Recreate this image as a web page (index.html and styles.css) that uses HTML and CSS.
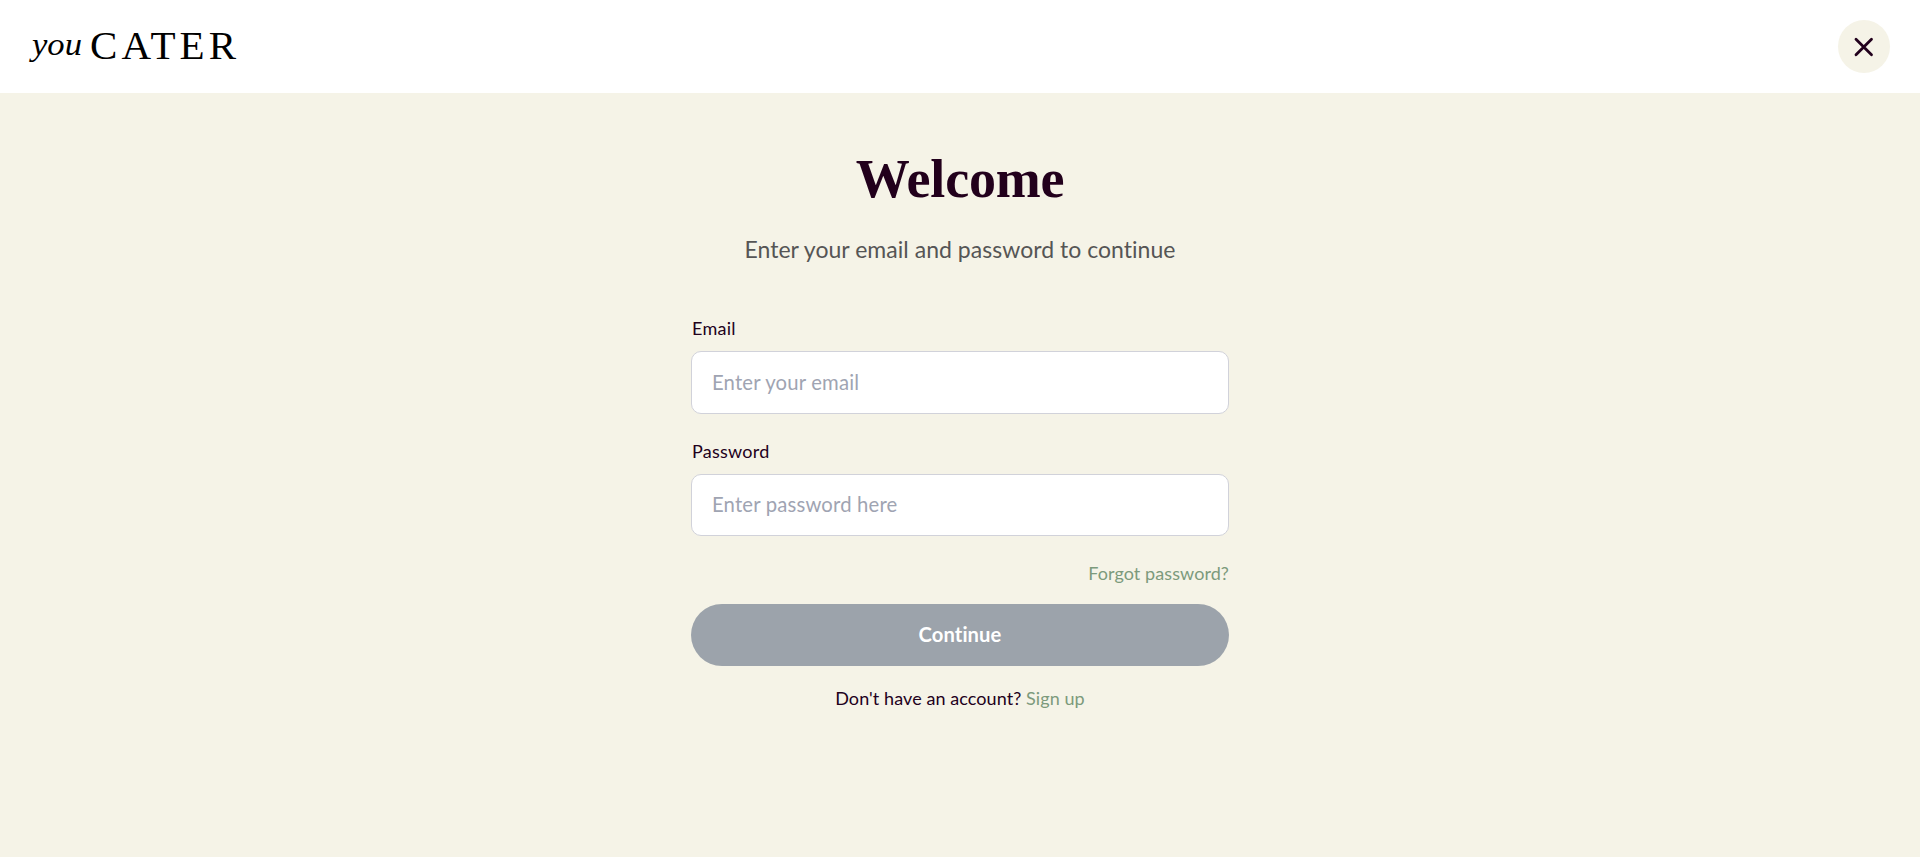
FILE: index.html
```html
<!DOCTYPE html>
<html lang="en">
<head>
<meta charset="utf-8">
<title>youCATER</title>
<link rel="stylesheet" href="styles.css">
</head>
<body>
<header class="topbar">
  <svg class="logo" width="212" height="45" viewBox="0 0 212 45" role="img" aria-label="you CATER">
    <text class="logo-you" x="5" y="28.8" textLength="50" lengthAdjust="spacingAndGlyphs">you</text>
    <text class="logo-cater" x="63" y="33" textLength="146" lengthAdjust="spacing">CATER</text>
  </svg>
  <button class="close" type="button" aria-label="Close">
    <svg width="20" height="20" viewBox="0 0 20 20"><path d="M2 2.3 17.5 17.7M17.5 2.3 2 17.7"/></svg>
  </button>
</header>
<main class="page">
  <h1 class="title">Welcome</h1>
  <p class="subtitle">Enter your email and password to continue</p>
  <form class="form">
    <label class="label" for="email">Email</label>
    <input class="input input-email" id="email" type="email" placeholder="Enter your email">
    <label class="label label-password" for="password">Password</label>
    <input class="input" id="password" type="password" placeholder="Enter password here">
    <a class="link forgot">Forgot password?</a>
    <button class="submit" type="button">Continue</button>
    <p class="signup"><span class="question">Don't have an account?</span> <a class="link">Sign up</a></p>
  </form>
</main>
</body>
</html>
```
FILE: styles.css
```css
* { box-sizing: border-box; }
body {
  margin: 0;
  min-height: 100vh;
  background: #f5f3e7;
  color: #22001c;
  font-family: Lato, "Open Sans", sans-serif;
}
.topbar {
  display: flex;
  align-items: center;
  justify-content: space-between;
  height: 93px;
  padding: 0 30px 0 27px;
  background: #fff;
}
.logo { margin-top: 3px; overflow: visible; }
.logo text { fill: #000; font-family: "Liberation Serif", serif; }
.logo .logo-you { font-size: 32px; font-style: italic; }
.logo .logo-cater { font-size: 41px; }
.close {
  display: flex;
  align-items: center;
  justify-content: center;
  width: 52px;
  height: 53px;
  padding: 0;
  border: 0;
  border-radius: 50%;
  background: #f5f3e7;
}
.close path { stroke: #22001c; stroke-width: 2.8; stroke-linecap: round; fill: none; }
.page {
  display: flex;
  flex-direction: column;
  align-items: center;
  padding-top: 56px;
}
.title {
  margin: 0;
  font: 700 54px/60px "Liberation Serif", serif;
  letter-spacing: -0.2px;
}
.subtitle {
  margin: 26px 0 0;
  color: #555;
  font-size: 23px;
  line-height: 28px;
  letter-spacing: 0.03px;
}
.form { display: flex; flex-direction: column; width: 538px; margin-top: 53px; }
.label { padding-left: 1px; font-size: 18px; line-height: 24px; letter-spacing: 0.25px; }
.label-password { margin-top: 25px; }
.input {
  height: 62px;
  margin-top: 11px;
  padding: 0 20px 2px;
  border: 1px solid #d1d2da;
  border-radius: 10px;
  background: #fff;
  font: 20.3px Lato, "Open Sans", sans-serif;
  letter-spacing: 0.17px;
}
.input-email { height: 63px; }
.input::placeholder { color: #9fa4b2; opacity: 1; }
.link { color: #7c9a7c; }
.forgot { align-self: flex-end; margin-top: 25px; font-size: 18px; line-height: 24px; letter-spacing: 0.08px; }
.submit {
  height: 62px;
  margin-top: 19px;
  padding: 0 0 2px;
  border: 0;
  border-radius: 31px;
  background: #9ca3ab;
  color: #fff;
  font: 700 20.2px Lato, "Open Sans", sans-serif;
  letter-spacing: 0.1px;
}
.signup { margin: 20px 0 0; text-align: center; font-size: 18px; line-height: 24px; letter-spacing: 0.08px; }
```
